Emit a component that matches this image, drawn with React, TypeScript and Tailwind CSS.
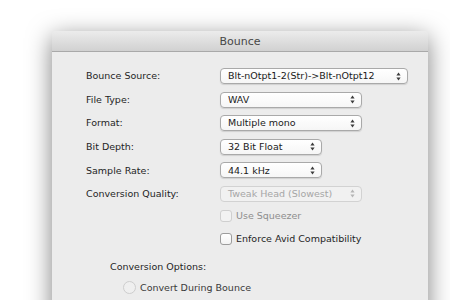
import type { ReactNode } from 'react'

const FONT = "font-['DejaVu_Sans',_'Liberation_Sans',_sans-serif]"

function Arrows({ dim }: { dim?: boolean }) {
  return (
    <svg width="5" height="9" viewBox="0 0 5 9" className="shrink-0">
      <path d="M2.5 0.5 L4.6 3.4 L0.4 3.4 Z" fill={dim ? '#b5b5b5' : '#3c3c3c'} />
      <path d="M2.5 8.5 L4.6 5.6 L0.4 5.6 Z" fill={dim ? '#b5b5b5' : '#3c3c3c'} />
    </svg>
  )
}

function Popup({ value, width, disabled }: { value: string; width: string; disabled?: boolean }) {
  return (
    <div
      className={`${width} h-[16px] flex items-center justify-between pl-[7px] pr-[6px] rounded-[4px] border text-[9.5px] leading-none ${
        disabled
          ? 'border-[#d2d2d2] bg-[#f1f1f1] text-[#a6a6a6]'
          : 'border-[#a9a9a9] bg-gradient-to-b from-white to-[#f6f6f6] text-[#1a1a1a] shadow-[0_1px_1px_rgba(0,0,0,0.12)]'
      }`}
    >
      <span className="whitespace-nowrap">{value}</span>
      <Arrows dim={disabled} />
    </div>
  )
}

function Row({ label, children }: { label: string; children: ReactNode }) {
  return (
    <div className="flex items-center">
      <div className="w-[134px] text-[9.5px] leading-none text-[#1f1f1f]">{label}</div>
      {children}
    </div>
  )
}

function Check({ label, disabled }: { label: string; disabled?: boolean }) {
  return (
    <div className="flex items-center gap-[4px] pl-[134px]">
      <div
        className={`w-[12px] h-[12px] rounded-[3px] border ${
          disabled ? 'border-[#cfcfcf] bg-[#f2f2f2]' : 'border-[#9c9c9c] bg-gradient-to-b from-white to-[#f3f3f3]'
        }`}
      />
      <span className={`text-[9.5px] leading-none ${disabled ? 'text-[#8e8e8e]' : 'text-[#1f1f1f]'}`}>{label}</span>
    </div>
  )
}

export default function App() {
  return (
    <div className={`w-[450px] h-[300px] overflow-hidden bg-white pt-[31px] pl-[52px] ${FONT}`}>
      <div className="w-[376px] h-[290px] rounded-t-[4px] bg-[#ececec] shadow-[0_6px_24px_rgba(0,0,0,0.5)] flex flex-col">
        <div className="h-[21px] shrink-0 pt-[2px] rounded-t-[4px] bg-gradient-to-b from-[#ececec] to-[#d1d1d1] border-b border-[#a9a9a9] flex items-center justify-center text-[11px] text-[#474747]">
          Bounce
        </div>
        <div className="pt-[16px] pl-[34px] flex flex-col gap-[7.6px]">
          <Row label="Bounce Source:">
            <Popup value="Blt-nOtpt1-2(Str)->Blt-nOtpt12" width="w-[188px]" />
          </Row>
          <Row label="File Type:">
            <Popup value="WAV" width="w-[142px]" />
          </Row>
          <Row label="Format:">
            <Popup value="Multiple mono" width="w-[142px]" />
          </Row>
          <Row label="Bit Depth:">
            <Popup value="32 Bit Float" width="w-[102px]" />
          </Row>
          <Row label="Sample Rate:">
            <Popup value="44.1 kHz" width="w-[102px]" />
          </Row>
          <Row label="Conversion Quality:">
            <Popup value="Tweak Head (Slowest)" width="w-[142px]" disabled />
          </Row>
        </div>
        <div className="pt-[8px] flex flex-col gap-[11px] pl-[34px]">
          <Check label="Use Squeezer" disabled />
          <Check label="Enforce Avid Compatibility" />
        </div>
        <div className="pt-[17px] pl-[58px] text-[9.5px] leading-none text-[#1f1f1f]">Conversion Options:</div>
        <div className="pt-[10px] pl-[71px] flex items-center gap-[4px]">
          <div className="w-[13px] h-[13px] rounded-full border border-[#cdcdcd] bg-[#efefef]" />
          <span className="text-[9.5px] leading-none text-[#3a3a3a]">Convert During Bounce</span>
        </div>
      </div>
    </div>
  )
}
